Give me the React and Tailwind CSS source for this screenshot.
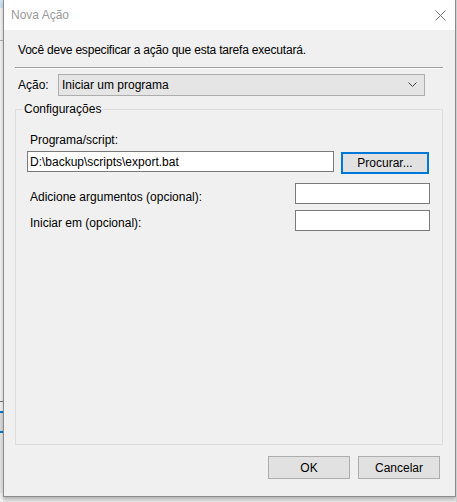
import React from "react";

const font = "font-['Liberation_Sans','Arial',sans-serif]";

const TextBox = ({ className = "", value = "" }) => (
  <div className={`h-[21px] bg-white border border-[#7a7a7a] flex items-center px-[2px] text-[12px] text-black ${className}`}>
    {value}
  </div>
);

const Button = ({ children }) => (
  <button className="w-[82px] h-[23px] bg-[#e1e1e1] border border-[#adadad] text-[12px] text-black flex items-center justify-center">
    {children}
  </button>
);

export default function App() {
  return (
    <div className={`w-[457px] h-[502px] bg-[#e6e6e6] flex overflow-hidden ${font}`}>
      {/* strip of the window behind */}
      <div className="w-[3px] h-full flex flex-col bg-[#f3f3f3]">
        <div className="h-[8px] bg-[#cfe3f5]" />
        <div className="h-[32px]" />
        <div className="h-[1px] bg-[#b0b0b0]" />
        <div className="h-[360px]" />
        <div className="h-[1px] bg-[#707070]" />
        <div className="h-[9px]" />
        <div className="h-[2px] bg-[#0078d7]" />
        <div className="h-[18px] bg-[#dadada]" />
        <div className="h-[2px] bg-[#0078d7]" />
        <div className="h-[60px] bg-[#e6e6e6]" />
      </div>

      {/* dialog */}
      <div className="w-[453px] h-[497px] flex flex-col border-x border-b border-[#8c8c8c] shadow-[0_2px_4px_rgba(0,0,0,0.25)]">
        <div className="h-[30px] bg-white flex items-center justify-between pl-[7px] pr-[9px]">
          <span className="text-[12px] text-[#9a9a9a]">Nova Ação</span>
          <svg width="11" height="11" viewBox="0 0 11 11" className="text-[#777]">
            <path d="M0.5 0.5 L10.5 10.5 M10.5 0.5 L0.5 10.5" stroke="currentColor" strokeWidth="1" fill="none" />
          </svg>
        </div>

        <div className="flex-1 bg-[#f0f0f0] flex flex-col text-[12px] text-black leading-[16px]">
          <p className="mt-[12px] ml-[14px] tracking-[-0.2px]">Você deve especificar a ação que esta tarefa executará.</p>

          <div className="mt-[9px] ml-[11px] w-[428px] border-t border-[#a0a0a0] border-b border-b-white" />

          <div className="mt-[5px] ml-[14px] flex items-center h-[22px]">
            <span className="w-[40px]">Ação:</span>
            <div className="w-[367px] h-[22px] bg-[#e5e5e5] border border-[#adadad] flex items-center justify-between pl-[3px] pr-[7px]">
              <span>Iniciar um programa</span>
              <svg width="9" height="6" viewBox="0 0 9 6" className="text-[#444]">
                <path d="M0.5 0.5 L4.5 4.5 L8.5 0.5" stroke="currentColor" strokeWidth="1" fill="none" />
              </svg>
            </div>
          </div>

          <fieldset className="mt-[5px] ml-[11px] w-[428px] h-[344px] border border-[#dcdcdc]">
            <legend className="ml-[7px] px-[1px] leading-[16px]">Configurações</legend>

            <div className="px-[11px] flex flex-col">
              <p className="mt-[15px] ml-[3px]">Programa/script:</p>
              <div className="mt-[3px] flex items-start">
                <TextBox className="w-[307px]" value="D:\backup\scripts\export.bat" />
                <div className="ml-[7px] mt-[1px] w-[88px] h-[22px] bg-[#e1e1e1] border-2 border-[#0078d7] flex items-center justify-center">
                  Procurar...
                </div>
              </div>

              <div className="mt-[9px] h-[20px] flex items-start justify-between">
                <span className="ml-[3px] mt-[6px]">Adicione argumentos (opcional):</span>
                <TextBox className="w-[135px] h-[20px] mr-[1px]" />
              </div>
              <div className="mt-[7px] h-[20px] flex items-start justify-between">
                <span className="ml-[3px] mt-[5px]">Iniciar em (opcional):</span>
                <TextBox className="w-[135px] h-[20px] mr-[1px]" />
              </div>
            </div>
          </fieldset>

          <div className="mt-[11px] flex justify-end gap-[8px] mr-[15px]">
            <Button>OK</Button>
            <Button>Cancelar</Button>
          </div>
        </div>
      </div>

      <div className="w-[1px] h-full bg-[#cfcfcf]" />
    </div>
  );
}
